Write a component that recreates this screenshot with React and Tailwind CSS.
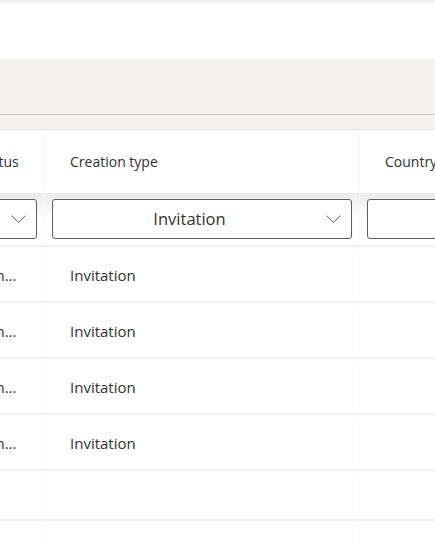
import React from "react";

const font = { fontFamily: '"Segoe UI", "Open Sans", "Liberation Sans", sans-serif' };

// column widths: first column is scrolled partly out of view
const cols = [
  { key: "status", title: "Status", width: "w-[92px]" },
  { key: "creation", title: "Creation type", width: "w-[315px]" },
  { key: "country", title: "Country", width: "w-[220px]" },
];

const rows = [
  { status: "Pending acceptance", creation: "Invitation", h: "h-[56px]" },
  { status: "Pending acceptance", creation: "Invitation", h: "h-[56px]" },
  { status: "Pending acceptance", creation: "Invitation", h: "h-[56px]" },
  { status: "Pending acceptance", creation: "Invitation", h: "h-[56px]" },
  { status: "", creation: "", h: "h-[50px]" },
  { status: "", creation: "", h: "h-[56px]" },
];

function Chevron() {
  return (
    <svg width="15" height="8" viewBox="0 0 15 8" fill="none" className="shrink-0">
      <path d="M0.5 0.5 L7.5 7.5 L14.5 0.5" stroke="#605e5c" strokeWidth="1" />
    </svg>
  );
}

function FilterBox({ value }) {
  return (
    <div className="flex h-[40px] items-center rounded-[3px] border border-[#605e5c] bg-white pr-[10px]">
      <span className="flex-1 truncate text-center text-[16.5px] text-[#323130]">{value}</span>
      {value !== undefined && <Chevron />}
    </div>
  );
}

export default function App() {
  return (
    <div className="h-[545px] w-[435px] overflow-hidden bg-white" style={font}>
      <div className="h-[3px] bg-[#f3f2f1]" />
      <div className="h-[56px] bg-white" />
      <div className="h-[55px] bg-[#f3f2f1]" />
      <div className="h-px bg-[#c8c6c4]" />
      <div className="h-[14px] bg-[#f3f2f1]" />
      <div className="h-px bg-[#e1dfdd]" />

      <div className="ml-[-47px] w-max">
        {/* header */}
        <div className="flex h-[63px] bg-white">
          {cols.map((c) => (
            <div key={c.key} className={`${c.width} flex items-center py-[3px]`}>
              <div className="flex h-full flex-1 items-center truncate pl-[25px] text-[14px] text-[#323130]">
                {c.title}
              </div>
              <div className="h-full w-px bg-[#f3f2f1]" />
            </div>
          ))}
        </div>

        {/* filter row */}
        <div className="flex h-[52px] bg-gradient-to-b from-[#ebebeb] via-white to-white">
          {cols.map((c, i) => (
            <div key={c.key} className={`${c.width} flex`}>
              <div className="flex-1 px-[7px] pt-[6px]">
                <FilterBox value={i === 1 ? "Invitation" : i === 0 ? "" : undefined} />
              </div>
              <div className="h-full w-px bg-[#f8f8f8]" />
            </div>
          ))}
        </div>

        {/* rows */}
        {rows.map((r, idx) => (
          <div key={idx} className={`flex ${r.h} border-t-2 border-[#f0efee] bg-white`}>
            {cols.map((c) => (
              <div key={c.key} className={`${c.width} flex items-center pt-[5px] pb-[3px]`}>
                <div
                  className={`flex-1 truncate pl-[25px] text-[15px] text-[#323130] ${
                    c.key === "status" ? "pr-[24px]" : ""
                  }`}
                >
                  {r[c.key] || ""}
                </div>
                <div className="h-full w-px bg-[#f8f8f8]" />
              </div>
            ))}
          </div>
        ))}
      </div>
    </div>
  );
}
